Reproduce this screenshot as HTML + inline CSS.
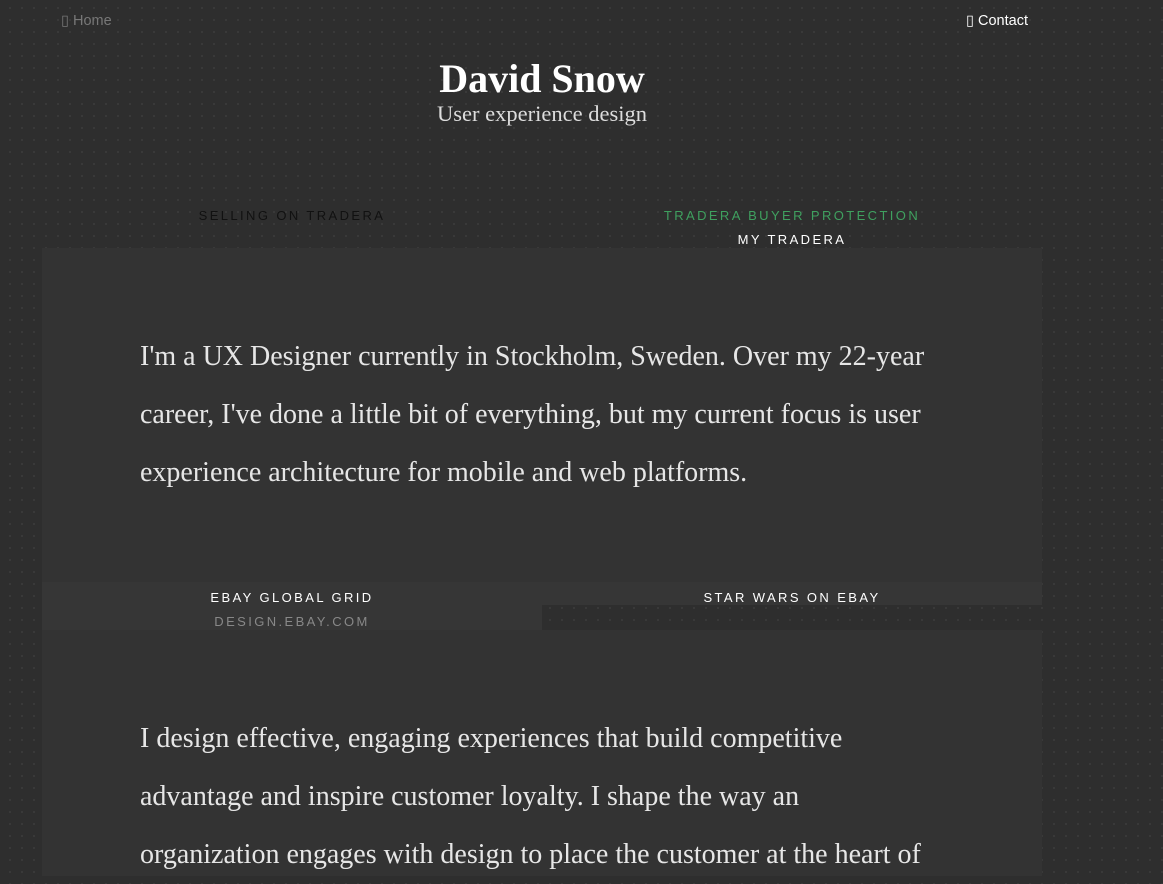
<!DOCTYPE html>
<html><head><style>
body{margin:0;width:1163px;height:876px;overflow:hidden;background-color:#2e2e2e;background-image:radial-gradient(circle,#404040 0.7px,transparent 1px);background-size:12px 12px;background-position:4px 2px;font-family:"Liberation Sans",sans-serif;position:relative}
.a{position:absolute}
.nav{top:13px;font-size:14.5px}
.lab{font-size:13px;letter-spacing:2.4px;text-align:center;width:500px}
.p{background:#333;left:42px;width:1000px}
.txt{font-family:"Liberation Serif",serif;font-size:28px;line-height:58px;color:#e6e6e6;left:140px;width:800px}
</style></head><body>
<div class="a nav" style="left:61px;color:#777">▯ Home</div>
<div class="a nav" style="left:966px;color:#fff">▯ Contact</div>
<div class="a" style="left:0;width:1084px;top:55px;text-align:center;font-family:'Liberation Serif',serif;color:#fff;font-size:40px;font-weight:bold">David Snow</div>
<div class="a" style="left:0;width:1084px;top:101px;text-align:center;font-family:'Liberation Serif',serif;color:#ddd;font-size:22.5px">User experience design</div>
<div class="a lab" style="left:42px;top:208px;color:#111">SELLING ON TRADERA</div>
<div class="a lab" style="left:542px;top:208px;color:#3fa05f">TRADERA BUYER PROTECTION</div>
<div class="a lab" style="left:542px;top:232px;color:#fff">MY TRADERA</div>
<div class="a p" style="top:248px;height:334px"></div>
<div class="a txt" style="top:328px">I'm a UX Designer currently in Stockholm, Sweden. Over my 22-year career, I've done a little bit of everything, but my current focus is user experience architecture for mobile and web platforms.</div>
<div class="a" style="left:42px;top:582px;width:1000px;height:23px;background:#363636"></div>
<div class="a" style="left:42px;top:605px;width:500px;height:25px;background:#363636"></div>
<div class="a lab" style="left:42px;top:590px;color:#fff">EBAY GLOBAL GRID</div>
<div class="a lab" style="left:42px;top:614px;color:#888">DESIGN.EBAY.COM</div>
<div class="a lab" style="left:542px;top:590px;color:#fff">STAR WARS ON EBAY</div>
<div class="a p" style="top:630px;height:246px"></div>
<div class="a txt" style="top:710px">I design effective, engaging experiences that build competitive advantage and inspire customer loyalty. I shape the way an organization engages with design to place the customer at the heart of</div>
</body></html>
